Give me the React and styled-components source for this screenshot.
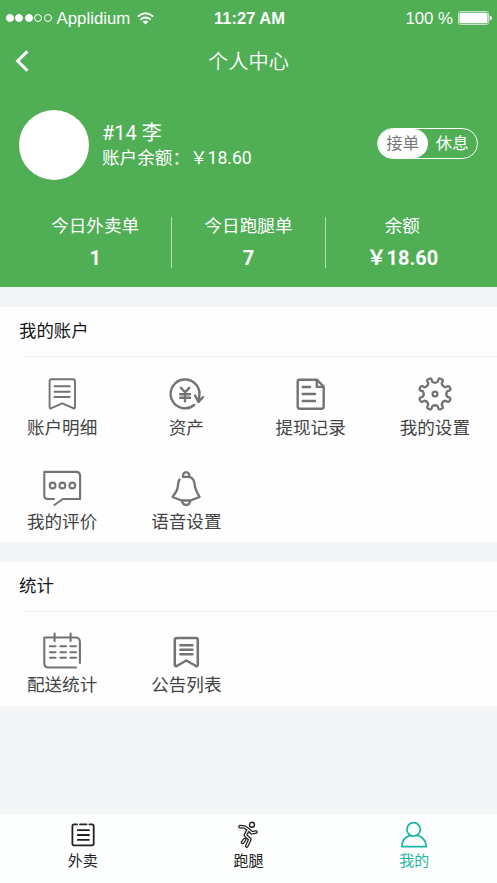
import React from "react";
import styled, { createGlobalStyle } from "styled-components";

const GlobalStyle = createGlobalStyle`
  body {
    margin: 0;
    background: #f4f5f7;
    font-family: Roboto, "Noto Sans CJK SC", sans-serif;
  }
  * {
    box-sizing: border-box;
  }
`;

const Page = styled.div`
  display: flex;
  flex-direction: column;
  width: 100%;
  height: 883px;
  overflow: hidden;
  background: #f4f5f7;
`;

const Header = styled.header`
  height: 287px;
  background: #50ae55;
  color: #fff;
`;

const StatusBar = styled.div`
  display: grid;
  grid-template-columns: 1fr auto 1fr;
  align-items: center;
  height: 36px;
  padding: 0 5px 0 6px;
  font-family: "Liberation Sans", Arial, sans-serif;
  font-size: 17px;
`;

const StatusGroup = styled.div`
  display: flex;
  align-items: center;
  justify-content: ${(props) => (props.$end ? "flex-end" : "flex-start")};
`;

const Signal = styled.div`
  display: flex;
  gap: 1.4px;
  margin-right: 5px;
`;

const Dot = styled.span`
  width: 8px;
  height: 8px;
  border: 1px solid #fff;
  border-radius: 50%;
  background: ${(props) => (props.$full ? "#fff" : "transparent")};
`;

const Carrier = styled.span`
  padding-top: 1px;
  font-size: 16.8px;
  margin-right: 7px;
`;

const Clock = styled.span`
  padding-left: 1px;
  font-weight: bold;
  font-size: 16.5px;
`;

const Percent = styled.span`
  padding-top: 1px;
  font-size: 16.8px;
  margin-right: 5px;
`;

const NavBar = styled.div`
  display: grid;
  grid-template-columns: 40px 1fr 40px;
  align-items: center;
  height: 50px;
  padding: 0 14px;
`;

const Title = styled.h1`
  margin: 0;
  padding-top: 2px;
  font-size: 20.2px;
  font-weight: 350;
  line-height: 30px;
  text-align: center;
`;

const Profile = styled.div`
  display: flex;
  align-items: center;
  height: 118px;
  padding: 0 19px;
`;

const Avatar = styled.div`
  width: 70px;
  height: 70px;
  border-radius: 50%;
  background: #fff;
`;

const UserInfo = styled.div`
  flex: 1;
  padding-left: 13px;
`;

const UserName = styled.div`
  font-size: 20px;
  line-height: 26px;
`;

const Balance = styled.div`
  font-size: 17.6px;
  line-height: 24px;
`;

const Switch = styled.div`
  display: flex;
  width: 101px;
  height: 31px;
  margin-bottom: 4px;
  border: 1.5px solid #fff;
  border-radius: 16px;
  overflow: hidden;
`;

const SwitchItem = styled.span`
  width: 50%;
  line-height: 29px;
  text-align: center;
  font-size: 16.4px;
  border-radius: 16px;
  color: ${(props) => (props.$on ? "#777" : "#fff")};
  background: ${(props) => (props.$on ? "#fff" : "transparent")};
`;

const Stats = styled.div`
  display: grid;
  grid-template-columns: repeat(3, 1fr);
  padding: 13px 18px 0 19px;
`;

const Stat = styled.div`
  height: 51px;
  text-align: center;
  border-right: ${(props) => (props.$last ? "none" : "1px solid #b3dbb5")};
`;

const StatLabel = styled.div`
  font-size: 17.6px;
  line-height: 18px;
`;

const StatValue = styled.div`
  margin-top: 11px;
  font-size: 20px;
  font-weight: 700;
  line-height: 24px;
`;

const Card = styled.section`
  height: ${(props) => props.$height}px;
  margin-top: 20px;
  background: #fefefe;
`;

const CardTitle = styled.h2`
  margin: 0;
  height: 50px;
  padding-left: 19px;
  line-height: 49px;
  font-size: 17.4px;
  font-weight: 400;
  color: #161616;
`;

const Line = styled.div`
  height: 1px;
  margin: -1px 0 0 22px;
  background: #f3f3f3;
`;

const Menu = styled.div`
  display: grid;
  grid-template-columns: repeat(4, 1fr);
  grid-auto-rows: 93.5px;
  padding-top: ${(props) => props.$top}px;
`;

const MenuItem = styled.div`
  display: flex;
  flex-direction: column;
  align-items: center;
`;

const MenuLabel = styled.span`
  font-size: 17.6px;
  line-height: 28px;
  color: #444;
`;

const TabBar = styled.nav`
  display: grid;
  grid-template-columns: repeat(3, 1fr);
  height: 69px;
  margin-top: auto;
  padding-top: 7px;
  background: #fdfefe;
`;

const Tab = styled.div`
  display: flex;
  flex-direction: column;
  align-items: center;
  color: ${(props) => (props.$active ? "#1fb5a5" : "#222")};
`;

const TabLabel = styled.span`
  font-size: 15px;
  line-height: 25px;
`;

const MenuSvg = styled.svg`
  display: block;
  width: 40px;
  height: 40px;
  fill: none;
  stroke: #737373;
  stroke-width: ${(props) => props.$w || 2.1};
  stroke-linecap: round;
  stroke-linejoin: round;
`;

const TabSvg = styled.svg`
  display: block;
  width: 28px;
  height: 28px;
  fill: none;
  stroke: currentColor;
  stroke-width: 1.8;
  stroke-linecap: round;
  stroke-linejoin: round;
`;

const DetailIcon = () => (
  <MenuSvg viewBox="0 0 40 40" $w={1.9}>
    <path d="M9.5 5.2H31Q33 5.2 33 7.2V33Q33 35.2 31.2 34.2L20.3 29.3L9.4 34.2Q7.6 35.2 7.6 33V7.2Q7.6 5.2 9.5 5.2Z" />
    <path d="M12.5 12.2H27.7M12.5 17.7H27.7M12.5 23H27.7" />
  </MenuSvg>
);

const AssetIcon = () => (
  <MenuSvg viewBox="0 0 40 40" $w={2.4}>
    <path d="M28.2 31A14.4 14.4 0 1 1 33 23.5L32.7 27.7" />
    <path d="M29 21.5L32.5 27.8L37 23.2" />
    <path d="M14.8 13.8L19 18.3L23.3 13.8M19 18.3V27.2M14.2 20.2H24M14.2 23.7H24" />
  </MenuSvg>
);

const RecordIcon = () => (
  <MenuSvg viewBox="0 0 40 40" $w={2.4}>
    <path d="M8.7 5.7H25.8L32.7 12.6V32.5Q32.7 34.7 30.5 34.7H8.7Q6.7 34.7 6.7 32.5V7.8Q6.7 5.7 8.7 5.7Z" />
    <path d="M25.8 6.2V12.9H32.2" />
    <path d="M11.7 13H19M11.7 20H24M11.7 27H24" />
  </MenuSvg>
);

// walks round eight teeth, with a rounded valley between each pair
const gearPath = () => {
  const at = (r, deg) => {
    const a = (deg * Math.PI) / 180;
    return `${(20 + r * Math.cos(a)).toFixed(2)} ${(20 + r * Math.sin(a)).toFixed(2)}`;
  };
  let d = "";
  for (let i = 0; i < 8; i++) {
    const c = i * 45 + 22.5;
    d += `${i ? "L" : "M"}${at(15.2, c - 9)}Q${at(16.4, c - 7)} ${at(16.2, c - 3)}`;
    d += `L${at(16.2, c + 3)}Q${at(16.4, c + 7)} ${at(15.2, c + 9)}`;
    d += `L${at(12.4, c + 10)}Q${at(10.4, c + 22.5)} ${at(12.4, c + 35)}`;
  }
  return d + "Z";
};

const GearIcon = () => (
  <MenuSvg viewBox="0 0 40 40" $w={2.3}>
    <path d={gearPath()} />
    <circle cx="20" cy="20" r="2.4" />
  </MenuSvg>
);

const CommentIcon = () => (
  <MenuSvg viewBox="0 0 40 40">
    <path d="M12 31H6Q2.3 31 2.3 27.4V3.9H34Q38.1 3.9 38.1 8V31H20.8L12.4 37" />
    <circle cx="10.6" cy="17.5" r="2.9" />
    <circle cx="20.4" cy="17.5" r="2.9" />
    <circle cx="30.3" cy="17.5" r="2.9" />
  </MenuSvg>
);

const BellIcon = () => (
  <MenuSvg viewBox="0 0 40 40" $w={2.3}>
    <path d="M13.5 11.5C11.5 14 12.5 20 10.5 23L6.6 29L15.5 32.5H24.5L33.6 29C31 24 28.8 21 28.6 16.5C28.4 12.5 27 10 23.6 8.8L17 8.8" />
    <path d="M17 8.6C16.6 2.6 23.6 2.6 23.4 8.6" />
    <path d="M16 33C17 38.3 23.2 38.3 24.3 33" />
  </MenuSvg>
);

const CalendarIcon = () => (
  <MenuSvg viewBox="0 0 40 40">
    <path d="M37.9 32V11Q37.9 6.5 33.5 6.5H2.3V32Q2.3 36.5 6.5 36.5H34" />
    <path d="M12.6 2.5V10M28.6 2.5V10" />
    <path d="M8 15.2H13.5M18.4 15.2H24M28.4 15.2H34M8 21.2H13.5M18.4 21.2H24M28.4 21.2H34M8 26.8H13.5M18.4 26.8H24M28.4 26.8H34" />
  </MenuSvg>
);

const NoticeIcon = () => (
  <MenuSvg viewBox="0 0 40 40" $w={2.5}>
    <path d="M11 7H30Q31.8 7 31.8 9V33.5Q31.8 35.8 30 35L20.3 29.5L10.8 35Q8.8 35.8 8.8 33.5V9Q8.8 7 11 7Z" />
    <path d="M14.4 14.2H26.4M14.4 18.7H26.4M14.4 23.3H26.4" />
  </MenuSvg>
);

const TakeoutIcon = () => (
  <TabSvg viewBox="0 0 28 28">
    <path d="M8 3.4H5Q3.4 3.4 3.4 5V22.6Q3.4 24.4 5 24.4H23Q24.7 24.4 24.7 22.6V5Q24.7 3.4 23 3.4H20.4M11 3.4H17.5" />
    <path d="M8.8 9.2H20M8.8 14H20M8.8 18.8H20" />
  </TabSvg>
);

const RunnerIcon = () => {
  const limbs = "M6 5.6L10.6 6L14.4 8.6L17.8 11.8L22 11M14.2 9L11.4 14.2L15.8 18.4L12.8 25M10.6 18.6L8.6 21.4";
  return (
    <TabSvg viewBox="0 0 28 28">
      <path d={limbs} strokeWidth="3.7" />
      <path d={limbs} stroke="#fdfefe" strokeWidth="1.2" />
      <circle cx="18" cy="3.8" r="2.5" strokeWidth="1.4" />
    </TabSvg>
  );
};

const UserIcon = () => (
  <TabSvg viewBox="0 0 28 28">
    <circle cx="13.6" cy="8.4" r="6.7" />
    <path d="M10.2 14.4C5 16 1.9 20 1.9 25.6H26.3C26.3 20 22.5 15.6 17 14.4" />
  </TabSvg>
);

const BackIcon = () => (
  <svg width="16" height="22" viewBox="0 0 16 22" fill="none" stroke="#fff" strokeWidth="3">
    <path d="M13.4 1.4L3.6 11L13.4 20.6" />
  </svg>
);

const WifiIcon = () => (
  <svg width="17" height="13" viewBox="0 0 17 13" fill="none" stroke="#fff" strokeWidth="1.9">
    <path d="M0.8 4.6Q8.5 -2.2 16.2 4.6M3.4 7.6Q8.5 3.2 13.6 7.6" />
    <path d="M5.6 9.6Q8.5 7.4 11.4 9.6L8.5 12.6Z" fill="#fff" stroke="none" />
  </svg>
);

const BatteryIcon = () => (
  <svg width="34" height="14" viewBox="0 0 34 14">
    <rect x="0.5" y="0.5" width="30" height="13" rx="2" fill="none" stroke="#c5e4c7" />
    <rect x="1.5" y="1.7" width="28" height="10.6" rx="1" fill="#fff" />
    <path d="M31.6 4.5Q34 5 34 7Q34 9 31.6 9.5Z" fill="#fff" />
  </svg>
);

const stats = [
  { label: "今日外卖单", value: "1" },
  { label: "今日跑腿单", value: "7" },
  { label: "余额", value: "￥18.60" },
];

const sections = [
  {
    title: "我的账户",
    height: 235,
    top: 17,
    items: [
      { label: "账户明细", Icon: DetailIcon },
      { label: "资产", Icon: AssetIcon },
      { label: "提现记录", Icon: RecordIcon },
      { label: "我的设置", Icon: GearIcon },
      { label: "我的评价", Icon: CommentIcon },
      { label: "语音设置", Icon: BellIcon },
    ],
  },
  {
    title: "统计",
    height: 144,
    top: 18.5,
    items: [
      { label: "配送统计", Icon: CalendarIcon },
      { label: "公告列表", Icon: NoticeIcon },
    ],
  },
];

const tabs = [
  { label: "外卖", Icon: TakeoutIcon },
  { label: "跑腿", Icon: RunnerIcon },
  { label: "我的", Icon: UserIcon, active: true },
];

export default function App() {
  return (
    <>
      <GlobalStyle />
      <Page>
        <Header>
          <StatusBar>
            <StatusGroup>
              <Signal>
                {[1, 2, 3, 4, 5].map((n) => (
                  <Dot key={n} $full={n <= 3} />
                ))}
              </Signal>
              <Carrier>Applidium</Carrier>
              <WifiIcon />
            </StatusGroup>
            <Clock>11:27 AM</Clock>
            <StatusGroup $end>
              <Percent>100 %</Percent>
              <BatteryIcon />
            </StatusGroup>
          </StatusBar>
          <NavBar>
            <BackIcon />
            <Title>个人中心</Title>
          </NavBar>
          <Profile>
            <Avatar />
            <UserInfo>
              <UserName>#14 李</UserName>
              <Balance>账户余额：￥18.60</Balance>
            </UserInfo>
            <Switch>
              <SwitchItem $on>接单</SwitchItem>
              <SwitchItem>休息</SwitchItem>
            </Switch>
          </Profile>
          <Stats>
            {stats.map((stat, i) => (
              <Stat key={stat.label} $last={i === stats.length - 1}>
                <StatLabel>{stat.label}</StatLabel>
                <StatValue>{stat.value}</StatValue>
              </Stat>
            ))}
          </Stats>
        </Header>
        {sections.map((section) => (
          <Card key={section.title} $height={section.height}>
            <CardTitle>{section.title}</CardTitle>
            <Line />
            <Menu $top={section.top}>
              {section.items.map(({ label, Icon }) => (
                <MenuItem key={label}>
                  <Icon />
                  <MenuLabel>{label}</MenuLabel>
                </MenuItem>
              ))}
            </Menu>
          </Card>
        ))}
        <TabBar>
          {tabs.map(({ label, Icon, active }) => (
            <Tab key={label} $active={active}>
              <Icon />
              <TabLabel>{label}</TabLabel>
            </Tab>
          ))}
        </TabBar>
      </Page>
    </>
  );
}
